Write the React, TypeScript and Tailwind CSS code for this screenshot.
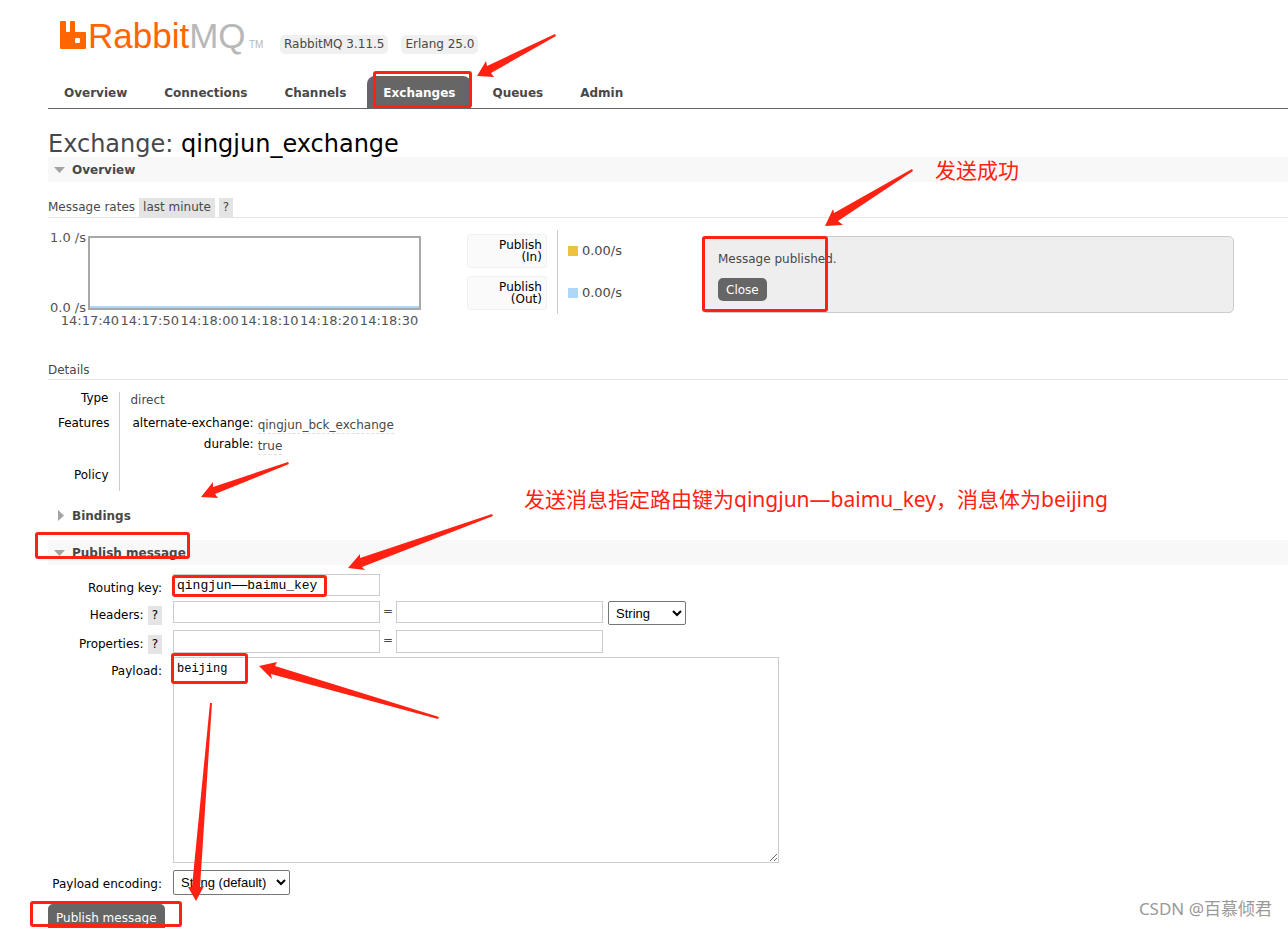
import type { ReactNode } from "react";

const tabs = ["Overview", "Connections", "Channels", "Exchanges", "Queues", "Admin"];

const ticks = ["14:17:40", "14:17:50", "14:18:00", "14:18:10", "14:18:20", "14:18:30"];

const rates = [
  { name: "Publish", kind: "(In)", value: "0.00/s", color: "bg-[#edc240]" },
  { name: "Publish", kind: "(Out)", value: "0.00/s", color: "bg-[#afd8f8]" },
];

const arrows = [
  "477,76 486,61 487,66 555,34 556,36 491,73 494,77",
  "825,226 833,209 834,213 912,169 913,171 838,221 843,225",
  "201,497 213,482 213,487 288,462 289,464 215,494 218,498",
  "348,568 360,554 360,558 492,514 493,516 362,567 365,570",
  "259,666 277,662 275,666 439,717 438,719 271,674 272,679",
  "196,901 188,887 192,887 210,703 212,703 200,887 204,886",
];

const marks = [
  "left-[373px] top-[71px] w-[99px] h-[37px]",
  "left-[702px] top-[236px] w-[126px] h-[76px]",
  "left-[35px] top-[532px] w-[155px] h-[27px]",
  "left-[172px] top-[575px] w-[155px] h-[22px]",
  "left-[171px] top-[653px] w-[77px] h-[31px]",
  "left-[30px] top-[901px] w-[152px] h-[26px]",
];

const inputStyle = "block border border-[#ccc] bg-white px-[3px] font-['Liberation_Mono',monospace] text-[13px] text-black";
const selectStyle = "border border-[#767676] rounded-[2px] bg-white px-[3px] font-['Liberation_Sans',sans-serif] text-[13px] text-black";

function Logo() {
  return (
    <svg width="208" height="46" viewBox="0 0 208 46" role="img" aria-label="RabbitMQ">
      <path
        fill="#ff6600"
        fillRule="evenodd"
        d="M1 7a1 1 0 0 1 1-1h4a1 1 0 0 1 1 1v9a1 1 0 0 0 1 1h2a1 1 0 0 0 1-1V7a1 1 0 0 1 1-1h3a1 1 0 0 1 1 1v9a1 1 0 0 0 1 1h9a1 1 0 0 1 1 1v15a1 1 0 0 1-1 1H2a1 1 0 0 1-1-1zM17 23a1 1 0 0 0-1 1v3a1 1 0 0 0 1 1h3a1 1 0 0 0 1-1v-3a1 1 0 0 0-1-1z"
      />
      <text x="29" y="33" fontSize="35" fontFamily="'Liberation Sans', sans-serif" fill="#ff6600">
        Rabbit<tspan fill="#b8b8b8">MQ</tspan>
      </text>
      <text x="190" y="33" fontSize="10" fontFamily="'Liberation Sans', sans-serif" fill="#b8b8b8">TM</text>
    </svg>
  );
}

function Section({ title, open = true, className = "" }: { title: string; open?: boolean; className?: string }) {
  return (
    <h2 className={`h-[25px] flex items-center font-bold ${open ? "bg-[#f8f8f8]" : ""} ${className}`}>
      <button className="flex items-center">
        <svg width="24" height="12" viewBox="0 0 24 12" fill="#a3a3a3">
          {open ? <path d="M6 3h11l-5.500 6z" /> : <path d="M10 0v11l6-5.500z" />}
        </svg>
        {title}
      </button>
    </h2>
  );
}

function Help() {
  return <button className="px-1 bg-[#e4e4e4] leading-[19px]">?</button>;
}

function FormRow({ label, id, help, className, children }: {
  label: string;
  id: string;
  help?: boolean;
  className: string;
  children: ReactNode;
}) {
  return (
    <div className={`flex items-start ${className}`}>
      <div className="w-[114px] mr-[11px] h-7 flex items-center justify-end gap-1 text-black whitespace-nowrap">
        <label htmlFor={id}>{label}</label>
        {help && <Help />}
      </div>
      {children}
    </div>
  );
}

function RateChart() {
  return (
    <div className="w-[373px] text-[13px] text-[#545454]">
      <div className="flex h-[74px]">
        <div className="w-10 flex flex-col justify-between items-center -my-1">
          <span className="leading-3">1.0 /s</span>
          <span className="leading-3">0.0 /s</span>
        </div>
        <div className="grow border-2 border-[#a8a8a8] flex items-end">
          <div className="h-[2px] grow bg-[#afd8f8]" />
        </div>
      </div>
      <div className="ml-3 mr-0.5 mt-[3px] flex leading-4">
        {ticks.map((t) => (
          <span key={t} className="flex-1 text-center whitespace-nowrap">{t}</span>
        ))}
      </div>
    </div>
  );
}

function Annotations() {
  return (
    <div className="absolute inset-0 overflow-hidden pointer-events-none font-['Noto_Sans','Noto_Sans_CJK_SC',sans-serif] text-[21px] leading-8 text-[#ff2212]">
      {marks.map((m) => (
        <div key={m} className={`absolute border-3 border-[#ff2212] rounded-[3px] ${m}`} />
      ))}
      <svg className="absolute left-0 top-0" width="1288" height="928" fill="#ff2212">
        {arrows.map((points) => (
          <polygon key={points} points={points} />
        ))}
      </svg>
      <p className="absolute left-[935px] top-[154px] whitespace-nowrap">发送成功</p>
      <p className="absolute left-[524px] top-[483px] whitespace-nowrap">
        发送消息指定路由键为qingjun—baimu_key，消息体为beijing
      </p>
      <p className="absolute right-4 bottom-[3px] text-[17px] text-[#999]">CSDN @百慕倾君</p>
    </div>
  );
}

export default function App() {
  return (
    <div className="relative min-h-screen bg-white pl-12 font-['DejaVu_Sans',Verdana,sans-serif] text-[12px] text-[#484848]">
      <header>
        <div className="h-[76px] pl-[11px] pt-[15px] flex items-start">
          <Logo />
          <div className="ml-[13px] mt-5 flex gap-[13px] leading-[19px]">
            <span className="px-1 rounded-[5px] bg-[#f0f0f0]">RabbitMQ 3.11.5</span>
            <span className="px-1 rounded-[5px] bg-[#f0f0f0]">Erlang 25.0</span>
          </div>
        </div>
        <nav className="flex gap-[5px] border-b border-[#666] font-bold leading-[30px]">
          {tabs.map((tab) => (
            <a
              key={tab}
              href="#"
              className={tab === "Exchanges" ? "px-4 pt-0.5 rounded-t-lg bg-[#666] text-white" : "px-4 pt-0.5"}
            >
              {tab}
            </a>
          ))}
        </nav>
      </header>

      <main>
        <h1 className="pt-[22px] text-[24px] leading-[26px]">
          Exchange: <b className="font-normal text-black">qingjun_exchange</b>
        </h1>
        <Section title="Overview" />

        <h3 className="mt-4 flex gap-1 border-b border-[#e4e4e4] leading-[19px]">
          Message rates
          <button className="px-1 bg-[#e4e4e4]">last minute</button>
          <Help />
        </h3>

        <div className="mt-3 flex items-start">
          <div className="pt-1.5">
            <RateChart />
          </div>
          <table className="ml-[46px] w-[155px] border-collapse">
            <tbody>
              {rates.map((r) => (
                <tr key={r.kind} className="h-[42px]">
                  <th className="w-[91px] pr-[10px] border-r border-[#ccc] font-normal">
                    <div className="h-[34px] px-1 py-1 rounded-[3px] border border-[#f0f0f0] bg-[#fafafa] text-right text-black leading-3">
                      {r.name}
                      <br />
                      {r.kind}
                    </div>
                  </th>
                  <td className="pl-[10px]">
                    <div className="flex items-center gap-1 text-[13px]">
                      <i className={`size-[10px] ${r.color}`} />
                      {r.value}
                    </div>
                  </td>
                </tr>
              ))}
            </tbody>
          </table>
          <div className="grow mt-1.5 ml-20 mr-[54px] h-[77px] px-[15px] pt-3.5 rounded-[5px] border border-[#ccc] bg-[#eee]">
            <p className="leading-4">Message published.</p>
            <button className="mt-[11px] h-[23px] px-2 rounded-[5px] bg-[#666] text-white">Close</button>
          </div>
        </div>

        <h3 className="mt-8 border-b border-[#e4e4e4] leading-[18px]">Details</h3>
        <table className="mt-3 border-collapse">
          <tbody className="align-top">
            <tr className="h-[25px]">
              <th className="w-[71px] pr-[10px] border-r border-[#ccc] text-right font-normal text-black leading-3">Type</th>
              <td className="pl-[11px] leading-4">direct</td>
            </tr>
            <tr className="h-[52px]">
              <th className="pr-[9px] border-r border-[#ccc] text-right font-normal text-black leading-3">Features</th>
              <td className="pl-[11px]">
                <table>
                  <tbody className="align-top">
                    <tr className="h-[21px]">
                      <th className="pl-0.5 pr-1 text-right font-normal text-black leading-3">alternate-exchange:</th>
                      <td className="leading-4">
                        <abbr className="block border-b border-dashed border-[#ddd]">qingjun_bck_exchange</abbr>
                      </td>
                    </tr>
                    <tr className="h-[21px]">
                      <th className="pr-1 text-right font-normal text-black leading-3">durable:</th>
                      <td className="leading-4">
                        <abbr className="inline-block border-b border-dashed border-[#ddd]">true</abbr>
                      </td>
                    </tr>
                  </tbody>
                </table>
              </td>
            </tr>
            <tr className="h-[22px]">
              <th className="pr-[10px] border-r border-[#ccc] text-right font-normal text-black leading-3">Policy</th>
              <td />
            </tr>
          </tbody>
        </table>

        <Section title="Bindings" open={false} className="mt-3" />
        <Section title="Publish message" className="mt-3" />

        <form className="mt-[9px]" onSubmit={(e) => e.preventDefault()}>
          <FormRow label="Routing key:" id="routing-key" className="h-[27px]">
            <input id="routing-key" className={`${inputStyle} w-[207px] h-[22px]`} defaultValue="qingjun——baimu_key" />
          </FormRow>
          <FormRow label="Headers:" id="headers" help className="h-[29px]">
            <input id="headers" className={`${inputStyle} w-[207px] h-[22px]`} />
            <span className="px-[3px] leading-5">=</span>
            <input aria-label="Header value" className={`${inputStyle} w-[207px] h-[22px]`} />
            <select aria-label="Header type" className={`${selectStyle} ml-[5px] w-[78px] h-6`}>
              <option>String</option>
            </select>
          </FormRow>
          <FormRow label="Properties:" id="properties" help className="h-[27px]">
            <input id="properties" className={`${inputStyle} w-[207px] h-[23px]`} />
            <span className="px-[3px] leading-5">=</span>
            <input aria-label="Property value" className={`${inputStyle} w-[207px] h-[23px]`} />
          </FormRow>
          <FormRow label="Payload:" id="payload" className="h-[213px]">
            <textarea
              id="payload"
              className="block w-[606px] h-[206px] px-[3px] py-[3px] border border-[#ccc] font-['Liberation_Mono',monospace] text-[12px] leading-4 text-black"
              defaultValue="beijing"
            />
          </FormRow>
          <FormRow label="Payload encoding:" id="encoding" className="h-[34px]">
            <select id="encoding" className={`${selectStyle} w-[117px] h-[25px]`}>
              <option>String (default)</option>
            </select>
          </FormRow>
          <button className="block px-2 pt-[5px] pb-px rounded-t-[5px] bg-[#666] text-white leading-[18px]">
            Publish message
          </button>
        </form>
      </main>

      <Annotations />
    </div>
  );
}
